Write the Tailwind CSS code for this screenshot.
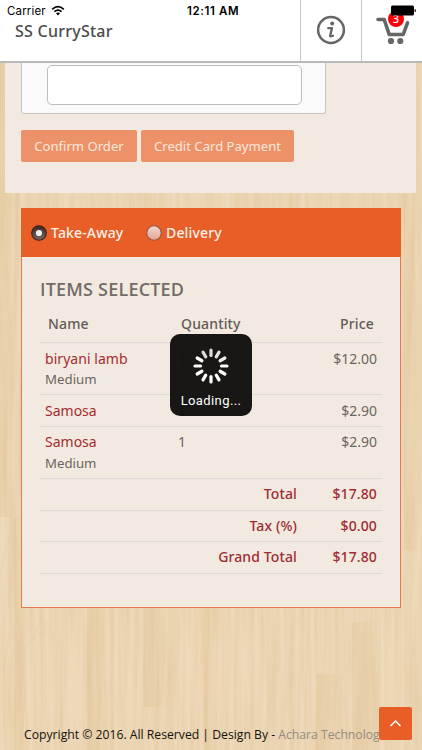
<!DOCTYPE html>
<html lang="en">
<head>
<meta charset="utf-8">
<title>SS CurryStar</title>
<script src="https://cdn.jsdelivr.net/npm/@tailwindcss/browser@4"></script>
</head>
<body class="relative h-[750px] w-[422px] overflow-hidden bg-[#ead4b3] font-['Noto_Sans',sans-serif] text-[#6b6562]">
<!-- wood background -->
<svg class="absolute inset-0 -z-10" width="422" height="750" viewBox="0 0 422 750">
  <defs>
    <filter id="grain" x="0" y="0" width="100%" height="100%" color-interpolation-filters="sRGB"><feTurbulence type="fractalNoise" baseFrequency="0.2 0.008" numOctaves="3" seed="4"/><feColorMatrix values="0 0 0 0 0.83  0 0 0 0 0.69  0 0 0 0 0.48  1.1 0 0 0 -0.3"/></filter>
    <linearGradient id="plank"><stop stop-color="#e2c798"/><stop offset=".5" stop-color="#e8d0a8"/><stop offset="1" stop-color="#e9d3af" stop-opacity=".2"/></linearGradient>
  </defs>
  <rect width="422" height="750" fill="#eed9ba"/>
  <g fill="url(#plank)" opacity=".4">
    <path d="M0 62h20v455H0z"/><path d="M14 517h14v233H14z"/><path d="M87 608h26v142H87z"/><path d="M143 608h32v99h-32z"/><path d="M204 608h18v142h-18z"/><path d="M316 674h30v76h-30z"/><path d="M352 622h28v128h-28z"/><path d="M404 62h18v488h-18z"/>
  </g>
  <rect width="422" height="750" filter="url(#grain)" opacity=".45"/>
  <g fill="none" stroke="#d9bd8e" stroke-width="1" opacity=".2">
    <path d="M4 740Q0 630 18 622Q32 660 20 746M10 715Q8 650 20 642Q26 670 20 700M0 580Q12 500 20 560M28 645Q42 620 55 645M33 640Q43 600 54 640M0 150Q15 175 20 210"/>
  </g>
</svg>

<header class="flex h-[63px] border-b-2 border-[#b9b9b9] bg-white">
  <div class="w-[300px] pt-[20px] pl-[15px] text-[16px] leading-[22px] font-medium tracking-[0.25px] text-[#4b4b4b]">SS CurryStar</div>
  <div class="flex w-[61px] justify-center border-l border-[#c8c8c8] pt-[15px]">
    <svg width="30" height="30" viewBox="0 0 30 30"><circle cx="15" cy="15" r="12.9" fill="none" stroke="#666" stroke-width="2.5"/><circle cx="16.2" cy="8.5" r="2" fill="#666"/><path d="M12.2 13.1H16L14.2 20.5Q13.9 22.2 17 20.8" fill="none" stroke="#666" stroke-width="2.3" stroke-linejoin="round" stroke-linecap="round"/></svg>
  </div>
  <div class="relative flex-1 border-l border-[#c8c8c8]">
    <svg class="absolute top-[14px] left-[12px]" width="36" height="32" viewBox="0 0 36 32"><path d="M4 5.5h6.200l5 15h14l4.3-11.7" fill="none" stroke="#666" stroke-width="3.6" stroke-linecap="round" stroke-linejoin="round"/><circle cx="17" cy="27" r="3.1" fill="#666"/><circle cx="26.3" cy="27" r="3.1" fill="#666"/></svg>
    <div class="absolute top-[11px] left-[26px] size-[16px] rounded-full bg-[#fa0008] text-center text-[11px] leading-[16px] font-medium text-white">3</div>
  </div>
</header>

<!-- status bar -->
<div class="absolute top-0 left-0 h-5 w-full font-[Inter,sans-serif] text-black">
  <span class="absolute top-[3px] left-[7px] text-[11.5px] leading-4 tracking-[0.15px]">Carrier</span>
  <svg class="absolute top-[5px] left-[51px]" width="14" height="11" viewBox="0 0 14 11"><path d="M1.2 4.4Q7-1 12.8 4.4M3.4 6.7Q7 3.4 10.6 6.7" fill="none" stroke="#000" stroke-width="1.7"/><path d="M5 8.3Q7 6.5 9 8.3L7 10.4z"/></svg>
  <span class="absolute top-[3px] left-[187px] text-[11.5px] leading-4 font-semibold tracking-[0.6px] whitespace-nowrap">12:11 AM</span>
  <svg class="absolute top-[5px] left-[391px]" width="26" height="11" viewBox="0 0 26 11"><rect y=".5" width="23" height="10" rx="1.5"/><path d="M23.7 4q1.3 0 1.3 1.5t-1.3 1.5z"/></svg>
</div>

<main>
  <section class="ml-[5px] h-[130px] w-[411px] bg-[#f2eae1] pl-[16px]">
    <div class="h-[51px] w-[305px] rounded-b-[3px] border border-t-0 border-[#c5c5c5] bg-[#fafafa] pt-[2px] pl-[25px]">
      <div class="h-[40px] w-[255px] rounded-[5px] border border-[#bdbdbd] bg-white"></div>
    </div>
    <div class="mt-[16px] flex gap-[4px] text-[13.1px] leading-[32px] text-[#fbe8da]">
      <div class="h-[32px] w-[116px] rounded-[2px] bg-[#ed9169] text-center whitespace-nowrap">Confirm Order</div>
      <div class="h-[32px] w-[153px] rounded-[2px] bg-[#ed9169] text-center whitespace-nowrap">Credit Card Payment</div>
    </div>
  </section>

  <section class="mt-[15px] ml-[21px] h-[400px] w-[380px] border border-[#e57a4c] bg-[#f2eae1]">
    <div class="-mx-px -mt-px flex h-[49px] items-center bg-[#e95e27] pl-[10px] text-[14px] font-medium tracking-[0.15px] text-[#fff2e8]">
      <svg width="16" height="16" viewBox="0 0 16 16"><defs><linearGradient id="on" x2="0" y2="1"><stop stop-color="#3a2925"/><stop offset="1" stop-color="#7c6662"/></linearGradient><linearGradient id="off" x2="0" y2="1"><stop stop-color="#eed9d3"/><stop offset="1" stop-color="#e5a28e"/></linearGradient></defs><circle cx="8" cy="8" r="7.3" fill="url(#on)" stroke="#3c2019" stroke-width="1.1"/><circle cx="8" cy="8" r="3.1" fill="#eee"/></svg>
      <span class="ml-[4px] w-[95px]">Take-Away</span>
      <svg width="16" height="16" viewBox="0 0 16 16"><circle cx="8" cy="8" r="7.3" fill="url(#off)" stroke="#97543e" stroke-width="1.1"/></svg>
      <span class="ml-[4px]">Delivery</span>
    </div>
    <h2 class="mt-[19px] ml-[18px] h-[27px] text-[18px] leading-[27px] font-semibold tracking-[0.2px] text-[#726c69] font-['Open_Sans',sans-serif]">ITEMS SELECTED</h2>
    <div class="ml-[18px] w-[342px] text-[14px] leading-[20px]">
      <div class="flex h-[40px] border-b border-[#dddbd9] pt-[11px] font-medium tracking-[0.15px] text-[#625b58]"><span class="w-[133px] pl-[8px]">Name</span><span class="w-[100px] pl-[8px]">Quantity</span><span class="flex-1 pr-[8px] text-right">Price</span></div>
      <div class="flex h-[52px] border-b border-[#dddbd9] px-[5px] pt-[6px]"><div class="w-[133px] tracking-[0.05px] text-[#a62a30]">biryani lamb<div class="text-[13.200px] leading-[21px] text-[#6b6562]">Medium</div></div><span class="w-[100px]">1</span><span class="flex-1 text-right">$12.00</span></div>
      <div class="flex h-[32px] border-b border-[#dddbd9] px-[5px] pt-[6px]"><div class="w-[133px] text-[#a62a30]">Samosa</div><span class="w-[100px]">1</span><span class="flex-1 text-right">$2.90</span></div>
      <div class="flex h-[52px] border-b border-[#dddbd9] px-[5px] pt-[5px]"><div class="w-[133px] text-[#a62a30]">Samosa<div class="text-[13.200px] leading-[22px] text-[#6b6562]">Medium</div></div><span class="w-[100px]">1</span><span class="flex-1 text-right">$2.90</span></div>
      <div class="flex h-[32px] border-b border-[#dddbd9] pt-[5px] pr-[5px] font-medium tracking-[0.12px] text-[#a02b33]"><span class="w-[257px] text-right">Total</span><span class="flex-1 text-right">$17.80</span></div>
      <div class="flex h-[31px] border-b border-[#dddbd9] pt-[5px] pr-[5px] font-medium tracking-[0.12px] text-[#a02b33]"><span class="w-[257px] text-right">Tax (%)</span><span class="flex-1 text-right">$0.00</span></div>
      <div class="flex h-[32px] border-b border-[#dddbd9] pt-[5px] pr-[5px] font-medium tracking-[0.12px] text-[#a02b33]"><span class="w-[257px] text-right">Grand Total</span><span class="flex-1 text-right">$17.80</span></div>
    </div>
  </section>
</main>

<footer class="mt-[117px] ml-[24px] w-[355px] overflow-hidden text-[12.2px] leading-[20px] whitespace-nowrap text-[#15120d] font-['Open_Sans',sans-serif]">Copyright © 2016. All Reserved | Design By - <span class="text-[#958c80]">Achara Technolog</span></footer>

<div class="absolute top-[707px] left-[379px] flex size-[33px] items-center justify-center rounded-[2px] bg-[#e95e27]">
  <svg width="13" height="9" viewBox="0 0 13 9"><path d="M1.5 7 6.5 2l5 5" fill="none" stroke="#fff" stroke-width="1.5"/></svg>
</div>

<!-- loading overlay -->
<div class="absolute top-[334px] left-[170px] flex h-[82px] w-[82px] flex-col items-center rounded-[10px] bg-[#11100e]/97 pt-[14px] text-white">
  <svg width="36" height="36" viewBox="-18 -18 36 36" stroke="#fff" stroke-width="3.2" stroke-linecap="round">
    <path d="M0-10.5V-16" opacity=".85"/><path d="M0-10.5V-16" transform="rotate(30)" opacity=".88"/><path d="M0-10.5V-16" transform="rotate(60)" opacity=".92"/><path d="M0-10.5V-16" transform="rotate(90)"/><path d="M0-10.5V-16" transform="rotate(120)"/><path d="M0-10.5V-16" transform="rotate(150)"/><path d="M0-10.5V-16" transform="rotate(180)"/><path d="M0-10.5V-16" transform="rotate(210)"/><path d="M0-10.5V-16" transform="rotate(240)"/><path d="M0-10.5V-16" transform="rotate(270)"/><path d="M0-10.5V-16" transform="rotate(300)"/><path d="M0-10.5V-16" transform="rotate(330)" opacity=".85"/>
  </svg>
  <div class="mt-[8px] text-[13px] leading-[18px] font-[Roboto,sans-serif] tracking-[0.4px]">Loading...</div>
</div>
</body>
</html>
